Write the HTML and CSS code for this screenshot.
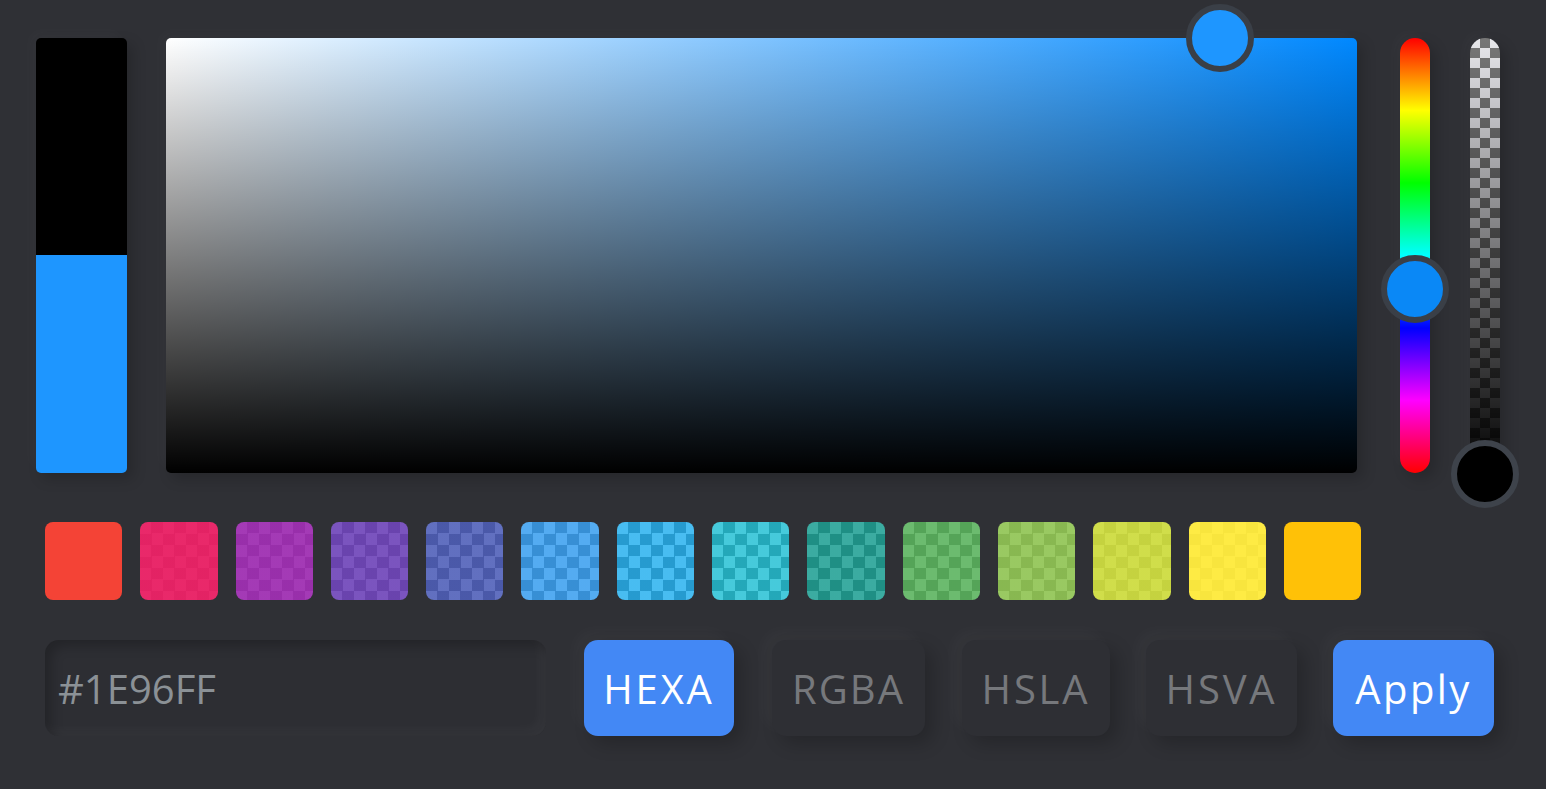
FILE: index.html
```html
<!DOCTYPE html>
<html lang="en">
<head>
<meta charset="utf-8">
<title>Color picker</title>
<link rel="stylesheet" href="styles.css">
</head>
<body>
<div class="picker">
  <div class="top">
    <div class="preview">
      <div class="preview-last"></div>
      <div class="preview-current"></div>
    </div>
    <div class="palette">
      <div class="knob knob-palette"></div>
    </div>
    <div class="slider hue">
      <div class="knob knob-hue"></div>
    </div>
    <div class="slider opacity">
      <div class="knob knob-opacity"></div>
    </div>
  </div>
  <div class="swatches">
    <button class="swatch" style="--c: rgba(244, 67, 54, 1)"></button>
    <button class="swatch" style="--c: rgba(233, 30, 99, 0.95)"></button>
    <button class="swatch" style="--c: rgba(156, 39, 176, 0.9)"></button>
    <button class="swatch" style="--c: rgba(103, 58, 183, 0.85)"></button>
    <button class="swatch" style="--c: rgba(63, 81, 181, 0.8)"></button>
    <button class="swatch" style="--c: rgba(33, 150, 243, 0.75)"></button>
    <button class="swatch" style="--c: rgba(3, 169, 244, 0.7)"></button>
    <button class="swatch" style="--c: rgba(0, 188, 212, 0.7)"></button>
    <button class="swatch" style="--c: rgba(0, 150, 136, 0.75)"></button>
    <button class="swatch" style="--c: rgba(76, 175, 80, 0.8)"></button>
    <button class="swatch" style="--c: rgba(139, 195, 74, 0.85)"></button>
    <button class="swatch" style="--c: rgba(205, 220, 57, 0.9)"></button>
    <button class="swatch" style="--c: rgba(255, 235, 59, 0.95)"></button>
    <button class="swatch" style="--c: rgba(255, 193, 7, 1)"></button>
  </div>
  <div class="interaction">
    <input class="result" type="text" value="#1E96FF" spellcheck="false">
    <button class="btn btn-active btn-hexa">HEXA</button>
    <button class="btn btn-rgba">RGBA</button>
    <button class="btn btn-hsla">HSLA</button>
    <button class="btn btn-hsva">HSVA</button>
    <button class="btn btn-active btn-apply">Apply</button>
  </div>
</div>
</body>
</html>
```

FILE: styles.css
```css
* { box-sizing: border-box; }

html, body {
  margin: 0;
  padding: 0;
  width: 1546px;
  height: 789px;
  overflow: hidden;
  background: #2f3035;
  font-family: "Open Sans", "Noto Sans", sans-serif;
}

.picker {
  padding: 38px 0 0 36px;
}

.top {
  display: flex;
  height: 435px;
}

.preview {
  width: 91px;
  border-radius: 5px;
  overflow: hidden;
  display: flex;
  flex-direction: column;
  box-shadow: 6px 6px 14px rgba(0, 0, 0, 0.18), -6px -6px 14px rgba(255, 255, 255, 0.025);
}

.preview-last { height: 217px; background: #000; }
.preview-current { flex: 1; background: #1e96ff; }

.palette {
  position: relative;
  width: 1191px;
  margin-left: 39px;
  border-radius: 5px;
  background:
    linear-gradient(to top, #000, rgba(0, 0, 0, 0)),
    linear-gradient(to left, #0088ff, #fff);
  box-shadow: 6px 6px 14px rgba(0, 0, 0, 0.18), -6px -6px 14px rgba(255, 255, 255, 0.025);
}

.slider {
  position: relative;
  width: 30px;
  border-radius: 15px;
  box-shadow: 6px 6px 14px rgba(0, 0, 0, 0.18), -6px -6px 14px rgba(255, 255, 255, 0.025);
}

.hue {
  margin-left: 43px;
  background: linear-gradient(to bottom, #ff0000, #ffff00, #00ff00, #00ffff, #0000ff, #ff00ff, #ff0000);
}

.opacity {
  margin-left: 40px;
  background:
    linear-gradient(to bottom, rgba(0, 0, 0, 0), #000),
    repeating-conic-gradient(#777 0 25%, #e8e8ec 0 50%) 0 0 / 20px 20px;
}

.knob {
  position: absolute;
  width: 68px;
  height: 68px;
  border-radius: 50%;
  border: 6px solid #3a3f47;
  transform: translate(-50%, -50%);
}

.knob-palette {
  left: 1054px;
  top: 0;
  background: #1e96ff;
}

.knob-hue {
  left: 15px;
  top: 251px;
  background: #0a88f6;
}

.knob-opacity {
  left: 15px;
  top: 436px;
  background: #000;
  border-color: #3e434b;
}

.swatches {
  display: flex;
  gap: 18px;
  margin: 49px 0 0 9px;
}

.swatch {
  width: 77.3px;
  height: 78px;
  padding: 0;
  border: 0;
  border-radius: 8px;
  background:
    linear-gradient(var(--c), var(--c)),
    repeating-conic-gradient(#7a7a7a 0 25%, #ececec 0 50%) 0 0 / 23px 23px;
}

.interaction {
  display: flex;
  align-items: center;
  margin: 40px 0 0 9px;
  height: 96px;
}

.result {
  width: 501px;
  height: 96px;
  border: 0;
  border-radius: 14px;
  padding: 0 0 0 13px;
  background: #2d2e33;
  color: #8b9196;
  font-family: inherit;
  font-size: 40px;
  letter-spacing: 0;
  outline: none;
  box-shadow: inset 6px 6px 12px rgba(0, 0, 0, 0.22), inset -6px -6px 12px rgba(255, 255, 255, 0.035);
}

.btn {
  height: 96px;
  border: 0;
  border-radius: 14px;
  padding: 0;
  font-family: inherit;
  font-size: 40px;
  letter-spacing: 0.07em;
  color: #76787c;
  background: #2e2f34;
  box-shadow: 8px 8px 18px rgba(0, 0, 0, 0.2), -8px -8px 18px rgba(255, 255, 255, 0.03);
}

.btn-active {
  background: #4388f5;
  color: #fff;
}

.btn-hexa { width: 150px; margin-left: 38px; }
.btn-rgba { width: 153px; margin-left: 38px; letter-spacing: 0.05em; }
.btn-hsla { width: 148px; margin-left: 37px; }
.btn-hsva { width: 151px; margin-left: 36px; }
.btn-apply { width: 161px; margin-left: 36px; letter-spacing: 0.06em; }
```
